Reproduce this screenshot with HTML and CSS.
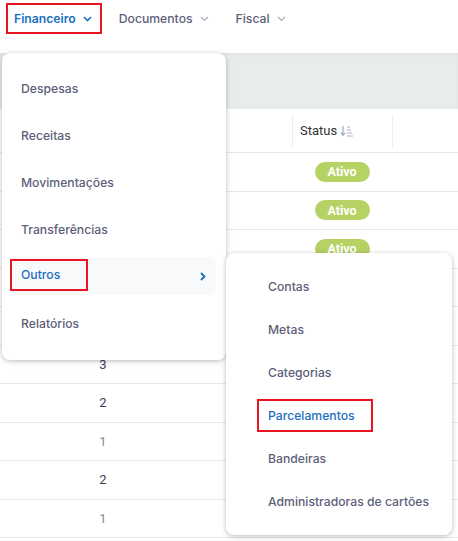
FILE: index.html
```html
<!DOCTYPE html>
<html lang="pt-BR">
<head>
    <meta charset="UTF-8">
    <meta name="viewport" content="width=device-width, initial-scale=1.0">
    <title>Financeiro - Outros</title>
    <link rel="stylesheet" href="styles.css">
</head>
<body>
    <header class="topnav">
        <a class="nav-item active mark">Financeiro
            <svg class="caret" width="9" height="6" viewBox="0 0 9 6"><path d="M1 1l3.5 3.5L8 1" fill="none" stroke="currentColor" stroke-width="1.6"/></svg>
        </a>
        <a class="nav-item">Documentos
            <svg class="caret" width="9" height="6" viewBox="0 0 9 6"><path d="M1 1l3.5 3.5L8 1" fill="none" stroke="currentColor" stroke-width="1.2"/></svg>
        </a>
        <a class="nav-item">Fiscal
            <svg class="caret" width="9" height="6" viewBox="0 0 9 6"><path d="M1 1l3.5 3.5L8 1" fill="none" stroke="currentColor" stroke-width="1.2"/></svg>
        </a>
    </header>

    <div class="band"></div>

    <div class="table">
        <div class="row head">
            <div class="cell"></div>
            <div class="cell"></div>
            <div class="cell sep">Status
                <svg class="sort" width="13" height="12" viewBox="0 0 13 12"><path d="M3 1v9M0.8 7.8L3 10.2 5.2 7.8" fill="none" stroke="currentColor" stroke-width="1.3"/><path d="M7 2h3M7 5h4M7 8h5M7 11h6" stroke="currentColor" stroke-width="1.1"/></svg>
            </div>
            <div class="cell sep"></div>
        </div>
        <!-- the first rows sit under the open dropdown -->
        <div class="row"><div class="cell"></div><div class="cell"></div><div class="cell center"><span class="badge">Ativo</span></div><div class="cell"></div></div>
        <div class="row"><div class="cell"></div><div class="cell"></div><div class="cell center"><span class="badge">Ativo</span></div><div class="cell"></div></div>
        <div class="row"><div class="cell"></div><div class="cell"></div><div class="cell center"><span class="badge">Ativo</span></div><div class="cell"></div></div>
        <div class="row"><div class="cell"></div><div class="cell"></div><div class="cell"></div><div class="cell"></div></div>
        <div class="row"><div class="cell"></div><div class="cell"></div><div class="cell"></div><div class="cell"></div></div>
        <div class="row"><div class="cell num dark">3</div><div class="cell"></div><div class="cell"></div><div class="cell"></div></div>
        <div class="row"><div class="cell num dark">2</div><div class="cell"></div><div class="cell"></div><div class="cell"></div></div>
        <div class="row"><div class="cell num">1</div><div class="cell"></div><div class="cell"></div><div class="cell"></div></div>
        <div class="row"><div class="cell num dark">2</div><div class="cell"></div><div class="cell"></div><div class="cell"></div></div>
        <div class="row"><div class="cell num">1</div><div class="cell"></div><div class="cell"></div><div class="cell"></div></div>
    </div>

    <!-- dropdown: Financeiro -->
    <ul class="menu menu-main">
        <li class="menu-item">Despesas</li>
        <li class="menu-item">Receitas</li>
        <li class="menu-item">Movimentações</li>
        <li class="menu-item">Transferências</li>
        <li class="menu-item open">
            <span class="mark mark-outros">Outros</span>
            <svg class="chev" width="6" height="9" viewBox="0 0 6 9"><path d="M1 1l3.5 3.5L1 8" fill="none" stroke="currentColor" stroke-width="1.8"/></svg>
        </li>
        <li class="menu-item">Relatórios</li>
    </ul>

    <!-- submenu: Outros -->
    <ul class="menu menu-sub">
        <li class="menu-item">Contas</li>
        <li class="menu-item">Metas</li>
        <li class="menu-item">Categorias</li>
        <li class="menu-item"><span class="mark mark-parc">Parcelamentos</span></li>
        <li class="menu-item">Bandeiras</li>
        <li class="menu-item">Administradoras de cartões</li>
    </ul>
</body>
</html>
```

FILE: styles.css
```css
body {
    margin: 0;
    font-family: Inter, "Noto Sans", sans-serif;
    background-color: #fff;
    color: #333;
    overflow: hidden;
}
.topnav {
    height: 53px;
    display: flex;
    align-items: flex-start;
    gap: 9px;
    padding: 3px 0 0 6px;
    box-sizing: border-box;
    background-color: #fff;
}
.nav-item {
    display: inline-flex;
    align-items: center;
    gap: 7px;
    height: 31px;
    box-sizing: border-box;
    padding: 0 8px 0 6px;
    border: 2px solid transparent;
    font-size: 12.2px;
    font-weight: 500;
    color: #5d6079;
}
.nav-item .caret {
    color: #a9adbd;
}
.nav-item.active {
    color: #1a6fbf;
    font-weight: 600;
}
.nav-item.active .caret {
    color: #1a6fbf;
}
.mark {
    border: 2px solid #e8141f !important;
}
.band {
    height: 56px;
    background-color: #e9eced;
    box-shadow: inset 0 2px 3px rgba(0, 0, 0, 0.04);
}
.table {
    font-family: Roboto, "Liberation Sans", sans-serif;
}
.row {
    display: grid;
    grid-template-columns: 206px 86px 100px 66px;
    height: 38.5px;
    box-sizing: border-box;
    border-bottom: 1px solid #e8e8e8;
}
.row.head {
    height: 44px;
    align-items: center;
}
.cell {
    display: flex;
    align-items: center;
    font-size: 13px;
}
.cell.sep {
    height: 32px;
    border-left: 1px solid #ececec;
    padding-left: 7px;
    color: #333;
    gap: 3px;
}
.sort {
    color: #a9b0c2;
}
.cell.center,
.cell.num {
    justify-content: center;
}
.cell.num {
    color: #8a8a8a;
}
.cell.num.dark {
    color: #3a3f55;
}
.badge {
    display: inline-flex;
    align-items: center;
    justify-content: center;
    width: 55px;
    height: 20px;
    border-radius: 10px;
    background-color: #b6d264;
    color: #fff;
    font-weight: 700;
    font-size: 12.5px;
}
.menu {
    position: absolute;
    list-style: none;
    margin: 0;
    background-color: #fff;
    border-radius: 8px;
    box-shadow: 0 1px 4px rgba(0, 0, 0, 0.22), 0 2px 10px rgba(0, 0, 0, 0.06);
    box-sizing: border-box;
}
.menu-item {
    display: flex;
    align-items: center;
    font-size: 12.2px;
    font-weight: 500;
    color: #5d6079;
}
.menu-main {
    top: 53px;
    left: 2px;
    width: 224px;
    height: 307px;
    padding: 16px 10px 0 8px;
}
.menu-main .menu-item {
    height: 38px;
    margin-bottom: 9px;
    padding-left: 11px;
    padding-right: 10px;
    border-radius: 7px;
}
.menu-main .menu-item.open {
    background-color: #f8f9fa;
    color: #1a6fbf;
    justify-content: space-between;
}
.mark-outros {
    margin-left: -11px;
    display: inline-flex;
    align-items: center;
    height: 28px;
    padding: 0 26px 0 9px;
    margin-top: -3px;
}
.chev {
    color: #1a6fbf;
}
.menu-sub {
    top: 253px;
    left: 226px;
    width: 226px;
    height: 282px;
    padding: 12px 8px;
}
.menu-sub .menu-item {
    height: 43px;
    padding-left: 34px;
}
.mark-parc {
    display: inline-flex;
    align-items: center;
    height: 29px;
    margin-left: -11px;
    padding: 0 16px 0 9px;
    color: #1a6fbf;
}
```
